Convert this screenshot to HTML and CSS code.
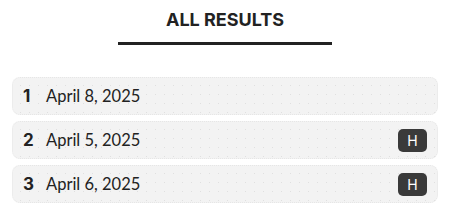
FILE: index.html
```html
<!DOCTYPE html>
<html>
<head>
<meta charset="utf-8">
<link rel="stylesheet" href="styles.css">
</head>
<body>
<div class="page">
  <header class="header">
    <h1 class="title">ALL RESULTS</h1>
    <div class="underline"></div>
  </header>
  <ul class="results">
    <li class="row"><span class="rank">1</span><span class="date">April 8, 2025</span></li>
    <li class="row"><span class="rank">2</span><span class="date">April 5, 2025</span><span class="badge">H</span></li>
    <li class="row"><span class="rank">3</span><span class="date">April 6, 2025</span><span class="badge">H</span></li>
  </ul>
</div>
</body>
</html>
```
FILE: styles.css
```css
html, body {
  margin: 0;
  padding: 0;
  background: #ffffff;
}
.page {
  width: 450px;
  font-family: "Inter", "Liberation Sans", sans-serif;
  color: #222222;
}
.header {
  display: flex;
  flex-direction: column;
  align-items: center;
  padding-top: 9px;
}
.title {
  margin: 0;
  font-size: 18px;
  line-height: 22px;
  font-weight: 700;
  color: #222222;
  letter-spacing: 0;
}
.underline {
  width: 214px;
  height: 3px;
  background: #222222;
  margin-top: 11px;
}
.results {
  list-style: none;
  margin: 0;
  padding: 32px 12px 0;
  display: flex;
  flex-direction: column;
  gap: 6px;
}
.row {
  box-sizing: border-box;
  height: 38px;
  display: flex;
  align-items: center;
  padding: 0 10px;
  border-radius: 8px;
  background-color: #f3f3f3;
  background-image: radial-gradient(circle, #e0e0e0 0.6px, transparent 0.9px);
  background-size: 9px 9px;
  background-position: 3px 3px;
  border: 1px dotted #e6e6e6;
}
.rank {
  font-weight: 700;
  font-size: 17px;
  width: 23px;
  color: #222222;
}
.date {
  font-family: "Lato", "Inter", sans-serif;
  font-size: 16.5px;
  line-height: 20px;
  padding-bottom: 1px;
  color: #222222;
  flex: 1;
}
.badge {
  width: 29px;
  height: 23px;
  border-radius: 5px;
  background: #3a3a3a;
  color: #ffffff;
  font-size: 14px;
  font-weight: 400;
  display: flex;
  align-items: center;
  justify-content: center;
}
```
